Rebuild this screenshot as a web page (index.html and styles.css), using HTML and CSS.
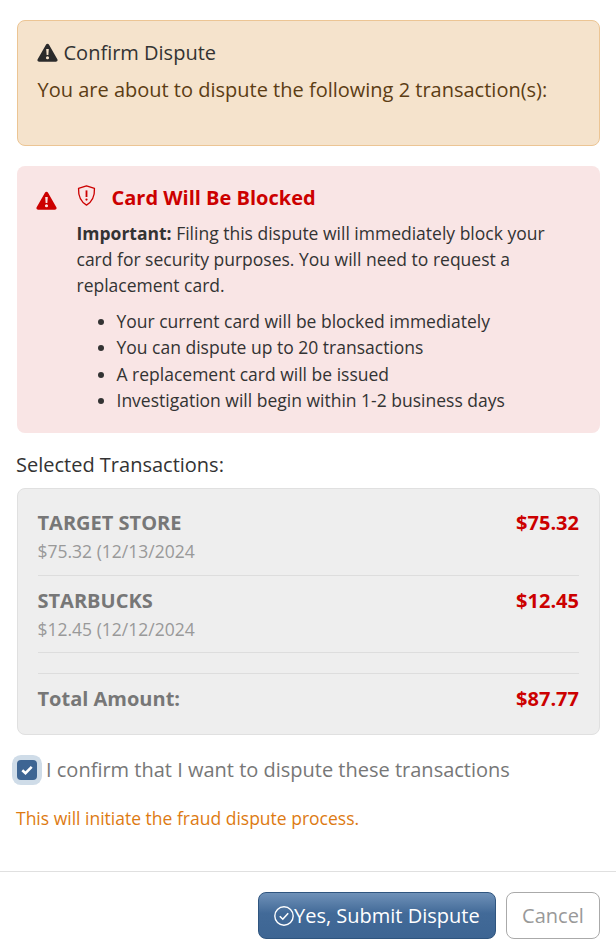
FILE: index.html
```html
<!DOCTYPE html>
<html lang="en">
<head>
    <meta charset="UTF-8">
    <meta name="viewport" content="width=device-width, initial-scale=1.0">
    <title>Confirm Dispute</title>
    <link rel="stylesheet" href="styles.css">
</head>
<body>
    <div class="dialog-body">
        <div class="alert-warning">
            <h3 class="alert-title">
                <svg class="icon-warning-dark" viewBox="0 0 24 22"><path fill-rule="evenodd" d="M12 1c.8 0 1.4.4 1.8 1.1l9.6 16.6c.8 1.4-.2 3-1.8 3H2.400c-1.600 0-2.600-1.600-1.800-3l9.600-16.600C10.600 1.400 11.200 1 12 1zM10.500 7l.5 7h2l.5-7h-3zM12 15.300a1.800 1.800 0 1 0 0 3.600 1.800 1.800 0 0 0 0-3.600z"/></svg>
                Confirm Dispute
            </h3>
            <p class="alert-text">You are about to dispute the following 2 transaction(s):</p>
        </div>

        <div class="alert-danger">
            <svg class="icon-warning-red" viewBox="0 0 24 22"><path fill-rule="evenodd" d="M12 1c.8 0 1.400.4 1.800 1.100l9.600 16.600c.8 1.400-.2 3-1.800 3H2.400c-1.600 0-2.600-1.600-1.800-3l9.600-16.600C10.600 1.400 11.200 1 12 1zM10.500 7l.5 7h2l.5-7h-3zM12 15.300a1.800 1.800 0 1 0 0 3.600 1.800 1.800 0 0 0 0-3.600z"/></svg>
            <div class="danger-content">
                <div class="danger-title">
                    <svg class="icon-shield" viewBox="1 0.700 18 20.600"><path d="M10 1.500l7.800 2.500c.3 6.500-1.300 12.500-7.800 16.500C3.500 16.500 1.900 10.500 2.200 4L10 1.500z" fill="none" stroke="#cc0000" stroke-width="1.300" stroke-linejoin="round"/><path d="M10 6v6.500" stroke="#cc0000" stroke-width="1.800"/><circle cx="10" cy="15" r="1.100" fill="#cc0000"/></svg>
                    <h4>Card Will Be Blocked</h4>
                </div>
                <p class="danger-text"><strong>Important:</strong> Filing this dispute will immediately block your card for security purposes. You will need to request a replacement card.</p>
                <ul class="danger-list">
                    <li>Your current card will be blocked immediately</li>
                    <li>You can dispute up to 20 transactions</li>
                    <li>A replacement card will be issued</li>
                    <li>Investigation will begin within 1-2 business days</li>
                </ul>
            </div>
        </div>

        <div class="selected-label">Selected Transactions:</div>

        <div class="transaction-panel">
            <div class="transaction-row">
                <div>
                    <div class="merchant">TARGET STORE</div>
                    <div class="transaction-meta">$75.32 (12/13/2024</div>
                </div>
                <div class="amount">$75.32</div>
            </div>
            <div class="transaction-row">
                <div>
                    <div class="merchant">STARBUCKS</div>
                    <div class="transaction-meta">$12.45 (12/12/2024</div>
                </div>
                <div class="amount">$12.45</div>
            </div>
            <div class="total-row">
                <div class="merchant">Total Amount:</div>
                <div class="amount">$87.77</div>
            </div>
        </div>

        <label class="confirm-check">
            <span class="checkbox">
                <svg viewBox="0 0 12 10"><path d="M1.300 5.200L4.500 8.200l6.200-6.400" fill="none" stroke="#fff" stroke-width="2.600"/></svg>
            </span>
            I confirm that I want to dispute these transactions
        </label>
        <p class="process-note">This will initiate the fraud dispute process.</p>
    </div>

    <div class="dialog-footer">
        <button class="btn-primary">
            <svg class="icon-check" viewBox="0 0 20 20"><circle cx="10" cy="10" r="9.200" fill="none" stroke="#fff" stroke-width="1.400"/><path d="M5.800 10.200l3 3 5.400-6" fill="none" stroke="#fff" stroke-width="1.600"/></svg>Yes, Submit Dispute
        </button>
        <button class="btn-cancel">Cancel</button>
    </div>
</body>
</html>
```

FILE: styles.css
```css
* {
    box-sizing: border-box;
    margin: 0;
    padding: 0;
}

body {
    background-color: #fff;
    font-family: "Open Sans", Arial, sans-serif;
    font-size: 17.5px;
    color: #333;
}

.dialog-body {
    padding: 20px 16px 0 16.500px;
}

.alert-warning {
    height: 126px;
    padding: 19px 20px 20px;
    background-color: #f5e3cc;
    border: 1px solid #ecc594;
    border-radius: 8px;
}

.alert-title {
    display: flex;
    align-items: center;
    gap: 5.500px;
    font-size: 20px;
    font-weight: 400;
    line-height: 25px;
    color: #333;
}

.icon-warning-dark {
    width: 21px;
    height: 19px;
    margin-left: -0.500px;
    fill: #2b2b2b;
}

.alert-text {
    margin-top: 12px;
    font-size: 20px;
    line-height: 25px;
    color: #5c3d14;
}

.alert-danger {
    display: flex;
    gap: 20px;
    height: 267px;
    margin-top: 20px;
    padding: 19px 20px 20px;
    background-color: #f9e5e5;
    border-radius: 8px;
}

.icon-warning-red {
    flex: none;
    width: 21px;
    height: 19px;
    margin-top: 6px;
    margin-left: -1px;
    fill: #cc0000;
}

.danger-title {
    display: flex;
    align-items: center;
    gap: 16px;
    height: 24px;
}

.icon-shield {
    width: 19px;
    height: 21px;
    margin-top: -3px;
}

.danger-title h4 {
    font-size: 20px;
    font-weight: 700;
    color: #cc0000;
}

.danger-text {
    margin-top: 11px;
    line-height: 26px;
    color: #333;
}

.danger-list {
    margin-top: 10px;
    padding-left: 40px;
    line-height: 26.400px;
}

.selected-label {
    margin-top: 19px;
    margin-left: -0.500px;
    font-size: 20px;
    line-height: 25px;
}

.transaction-panel {
    margin-top: 10.500px;
    padding: 20px;
    height: 247px;
    background-color: #eee;
    border: 1px solid #e0e0e0;
    border-radius: 8px;
}

.transaction-row {
    display: flex;
    justify-content: space-between;
    height: 67px;
    border-bottom: 1px solid #ddd;
}

.transaction-row + .transaction-row {
    height: 77px;
    padding-top: 11px;
}

.merchant {
    font-weight: 700;
    font-size: 20px;
    line-height: 28px;
    color: #777;
}

.transaction-meta {
    line-height: 28px;
    color: #999;
}

.amount {
    font-weight: 700;
    font-size: 20px;
    line-height: 28px;
    color: #cc0000;
}

.total-row {
    display: flex;
    justify-content: space-between;
    margin-top: 20px;
    padding-top: 11px;
    border-top: 1px solid #ddd;
}

.confirm-check {
    display: flex;
    align-items: center;
    gap: 9.500px;
    margin-top: 21.500px;
    font-size: 20px;
    line-height: 28px;
    color: #777;
}

.checkbox {
    display: flex;
    align-items: center;
    justify-content: center;
    width: 20px;
    height: 20px;
    background-color: #3d6593;
    border-radius: 4px;
    box-shadow: 0 0 0 5px #cfdce8;
}

.checkbox svg {
    width: 12px;
    height: 10px;
}

.process-note {
    margin-top: 22px;
    margin-left: -0.500px;
    line-height: 24px;
    color: #dd7a12;
}

.dialog-footer {
    display: flex;
    justify-content: flex-end;
    gap: 10px;
    margin-top: 41px;
    padding: 20px 16px 0;
    border-top: 1px solid #e0e0e0;
}

.btn-primary,
.btn-cancel {
    height: 47px;
    font-family: inherit;
    font-size: 20px;
    border-radius: 8px;
}

.btn-primary {
    display: flex;
    align-items: center;
    width: 238px;
    padding: 0 15px;
    color: #fff;
    background: linear-gradient(#6f91b8, #426a98 45%, #3d6593);
    border: 1px solid #2f557f;
}

.icon-check {
    width: 20px;
    height: 20px;
}

.btn-cancel {
    width: 94px;
    color: #999;
    background: #fff;
    border: 1px solid #aaa;
}
```
